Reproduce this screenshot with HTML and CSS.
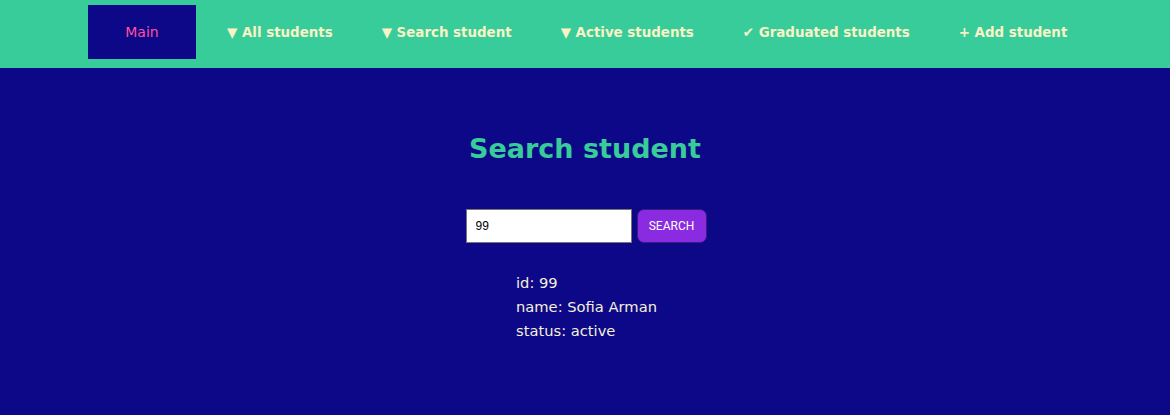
FILE: index.html
```html
<!DOCTYPE html>
<html>
<head>
<meta charset="utf-8">
<link rel="stylesheet" href="styles.css">
</head>
<body>
<nav class="nav">
  <a class="nav-item nav-main">Main</a>
  <a class="nav-item">▼ All students</a>
  <a class="nav-item">▼ Search student</a>
  <a class="nav-item">▼ Active students</a>
  <a class="nav-item">✔ Graduated students</a>
  <a class="nav-item">+ Add student</a>
</nav>
<main class="content">
  <h1 class="title">Search student</h1>
  <form class="search">
    <input class="search-input" type="text" value="99">
    <button class="search-btn" type="button">SEARCH</button>
  </form>
  <div class="result">
    <div class="result-line">id: 99</div>
    <div class="result-line">name: Sofia Arman</div>
    <div class="result-line">status: active</div>
  </div>
</main>
</body>
</html>
```
FILE: styles.css
```css
html, body {
  margin: 0;
  padding: 0;
  height: 100%;
}
body {
  background: #0d0887;
  font-family: "DejaVu Sans", Verdana, sans-serif;
}
.nav {
  background: #38cc9a;
  height: 68px;
  display: flex;
  align-items: flex-start;
  padding-left: 88px;
  padding-top: 5px;
  box-sizing: border-box;
}
.nav-item {
  height: 54px;
  display: flex;
  align-items: center;
  color: #f8f3c6;
  font-weight: bold;
  font-size: 13.4px;
  padding: 0 24.5px;
  white-space: nowrap;
}
.nav-main {
  background: #0d0887;
  color: #ff4f9e;
  font-weight: normal;
  font-size: 14px;
  width: 108px;
  box-sizing: border-box;
  justify-content: center;
  padding: 0;
  margin-right: 6.5px;
}
.content {
  display: flex;
  flex-direction: column;
  align-items: center;
}
.title {
  color: #38cc9a;
  font-size: 27px;
  font-weight: bold;
  margin: 64px 0 0 0;
  line-height: 34px;
}
.search {
  display: flex;
  gap: 5px;
  margin-top: 43px;
  padding-left: 2px;
}
.search-input {
  width: 166px;
  height: 34px;
  box-sizing: border-box;
  border: 1px solid #767676;
  padding: 0 9px;
  font-family: "Liberation Sans", Arial, sans-serif;
  font-size: 12px;
  margin: 0;
}
.search-btn {
  width: 70px;
  height: 34px;
  background: #8a2be2;
  color: #fff;
  border: 1px solid #3a1c80;
  border-radius: 7px;
  font-family: Roboto, "Liberation Sans", sans-serif;
  font-size: 12px;
  padding: 0;
  margin: 0;
}
.result {
  width: 240px;
  box-sizing: border-box;
  padding-left: 51px;
  margin-top: 28px;
  color: #f3f0dc;
  font-size: 14.7px;
  line-height: 24px;
}
```
